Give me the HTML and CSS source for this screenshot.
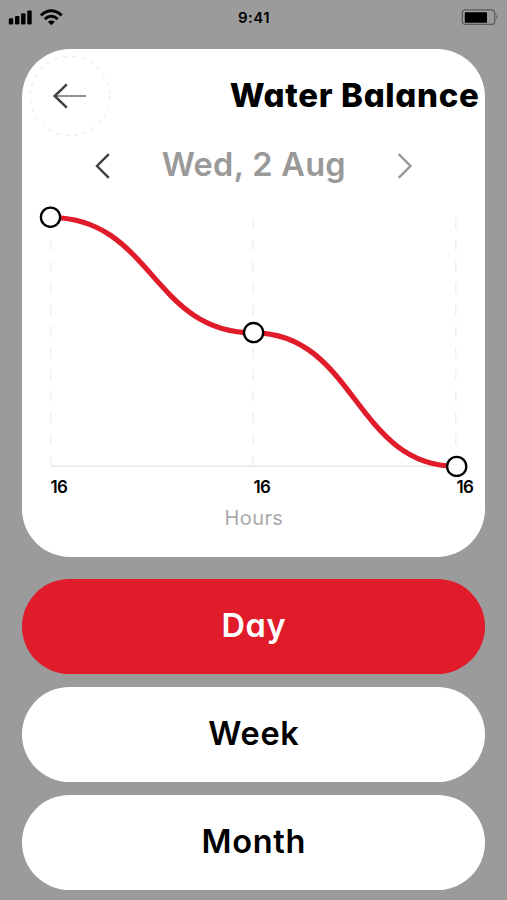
FILE: index.html
```
<!DOCTYPE html>
<html lang="en">
<head>
  <meta charset="UTF-8" />
  <meta name="viewport" content="width=device-width, initial-scale=1.0"/>
  <title>Water Balance</title>
  <link rel="stylesheet" href="styles.css">
</head>
<body>
<div class="status-bar">
  <svg class="signal" width="55" height="20" viewBox="0 0 55 20" aria-hidden="true">
    <rect x="0.8" y="10.2" width="4.4" height="6.2" rx="1.2"/>
    <rect x="7" y="8" width="4.4" height="8.4" rx="1.2"/>
    <rect x="13.1" y="5.3" width="4.4" height="11.1" rx="1.2"/>
    <rect x="19.3" y="2.4" width="4.4" height="14" rx="1.2"/>
    <g fill="none" stroke="#000" stroke-width="3">
      <path d="M32.9 7.3Q43.3 -1.9 53.7 7.3"/>
      <path d="M36.8 11.2Q43.3 5.4 49.8 11.2"/>
    </g>
    <path d="M39.8 13.8Q43.3 11.2 46.8 13.8L43.3 17.3Z"/>
  </svg>
  <span class="time">9:41</span>
  <svg class="battery" width="38" height="18" viewBox="0 0 38 18" aria-hidden="true">
    <rect x="1.3" y="1.8" width="32.4" height="14.6" rx="3" fill="none" stroke="#5c5c5c" stroke-width="1.3"/>
    <rect x="3.8" y="4.2" width="22.2" height="10.6" rx="0.8"/>
    <path d="M35.4 6.6Q37.6 9 35.4 11.8Z" fill="#5c5c5c"/>
  </svg>
</div>

<main class="screen">
  <section class="card">
    <header class="card-header">
      <button class="back" aria-label="Back">
        <svg width="82" height="82" viewBox="0 0 82 82">
          <circle cx="41" cy="41" r="39.7" fill="none" stroke="#eee" stroke-width="1.2" stroke-dasharray="4 5"/>
          <path d="M27 41H57" fill="none" stroke="#929292" stroke-width="2.1"/>
          <path d="M37.8 29.4L25.7 41L37.8 52.6" fill="none" stroke="#3f3f3f" stroke-width="2.5"/>
        </svg>
      </button>
      <h1>Water Balance</h1>
    </header>

    <div class="date-row">
      <button aria-label="Previous day">
        <svg width="18" height="28" viewBox="0 0 18 28"><path d="M15.8 2.2L4 14L15.8 25.8" fill="none" stroke="#3f3f3f" stroke-width="2.4"/></svg>
      </button>
      <span class="date">Wed, 2 Aug</span>
      <button aria-label="Next day">
        <svg width="18" height="28" viewBox="0 0 18 28"><path d="M2.7 2.2L14.5 14L2.7 25.8" fill="none" stroke="#999" stroke-width="2.4"/></svg>
      </button>
    </div>

    <div class="chart">
      <svg width="463" height="277" viewBox="0 0 463 277">
        <g stroke="#efefef" stroke-width="1.4" stroke-dasharray="11 10.6">
          <path d="M28.7 18V266"/>
          <path d="M231.2 18V266"/>
          <path d="M433.8 18V266"/>
        </g>
        <path d="M28.5 266.3H434" stroke="#e6e6e6" stroke-width="1.4"/>
        <path d="M28.5 17.5C130 17.5 130 132.8 231.5 132.8C333 132.8 333 266.3 434.5 266.3" fill="none" stroke="#e01b2a" stroke-width="5.2"/>
        <g fill="#fff" stroke="#000" stroke-width="2.3">
          <circle cx="28.5" cy="17.2" r="9.6"/>
          <circle cx="231.6" cy="132.6" r="9.6"/>
          <circle cx="434.7" cy="266.4" r="9.6"/>
        </g>
      </svg>
      <div class="labels">
        <span>16</span>
        <span>16</span>
        <span>16</span>
      </div>
      <div class="axis-title">Hours</div>
    </div>
  </section>

  <button class="period active"><span class="day">Day</span></button>
  <button class="period"><span class="week">Week</span></button>
  <button class="period"><span class="month">Month</span></button>
</main>
</body>
</html>
```
FILE: styles.css
```
* { box-sizing: border-box; }
body {
  margin: 0;
  height: 900px;
  overflow: hidden;
  background: #9b9b9b;
  color: #000;
  font-family: Inter, "Liberation Sans", sans-serif;
  font-feature-settings: "cv11";
}
button {
  padding: 0;
  border: none;
  background: none;
  color: inherit;
  font: inherit;
  font-feature-settings: inherit;
  cursor: pointer;
}
svg { display: block; }

.status-bar {
  height: 48.5px;
  padding: 8px 8px 0;
  display: grid;
  grid-template-columns: 1fr auto 1fr;
  align-items: start;
}
.time {
  padding-left: 1px;
  font-size: 15px;
  font-weight: 600;
  line-height: 19px;
  letter-spacing: 0.4px;
}
.battery { justify-self: end; }

.screen { padding: 0 21.6px 0 22.4px; }
.card {
  height: 508.5px;
  margin-bottom: 22px;
  background: #fff;
  border-radius: 48px;
}
.card-header {
  display: flex;
  justify-content: space-between;
  align-items: center;
  padding: 6.5px 6px 0 6.8px;
}
h1 {
  margin: 0;
  padding-bottom: 2px;
  font-size: 33px;
  font-weight: 800;
  line-height: 40px;
  letter-spacing: 0.65px;
}

.date-row {
  display: flex;
  justify-content: space-between;
  align-items: center;
  height: 40px;
  padding: 0 71px;
  margin-top: 8.5px;
}
.date {
  padding-bottom: 2px;
  color: #999;
  font-size: 32.5px;
  font-weight: 600;
  line-height: 40px;
  letter-spacing: 0.3px;
}

.chart { margin-top: 14px; }
.labels {
  display: grid;
  grid-template-columns: 203px 203px auto;
  padding-left: 28px;
  font-size: 17px;
  font-weight: 600;
  line-height: 20px;
  letter-spacing: -0.5px;
}
.axis-title {
  margin-top: 9px;
  text-align: center;
  color: #aaa;
  font-size: 20px;
  font-weight: 400;
  line-height: 24px;
  letter-spacing: 0.4px;
}

.period {
  display: block;
  width: 100%;
  height: 94.5px;
  margin-bottom: 13.5px;
  background: #fff;
  border-radius: 48px;
  font-size: 32.5px;
  font-weight: 600;
  letter-spacing: 0.7px;
}
.period span { display: block; padding-bottom: 2px; }
.period.active { background: #e01b2a; color: #fff; }
```
